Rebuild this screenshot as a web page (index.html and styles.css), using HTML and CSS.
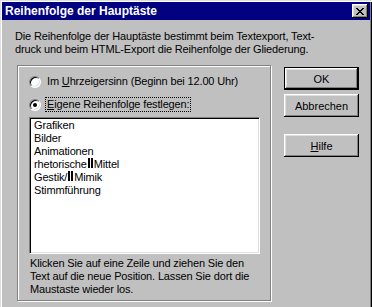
FILE: index.html
```html
<!DOCTYPE html>
<html lang="de">
<head>
    <meta charset="UTF-8">
    <title>Reihenfolge der Hauptäste</title>
    <link rel="stylesheet" href="styles.css">
</head>
<body>
    <div class="window">
        <div class="titlebar">
            <span class="title">Reihenfolge der Hauptäste</span>
            <button class="close" title="Schließen">
                <svg width="8" height="7" viewBox="0 0 8 7" shape-rendering="crispEdges">
                    <path d="M0 0h2v1h-2zM6 0h2v1h-2zM1 1h2v1h-2zM5 1h2v1h-2zM2 2h4v1h-4zM3 3h2v1h-2zM2 4h4v1h-4zM1 5h2v1h-2zM5 5h2v1h-2zM0 6h2v1h-2zM6 6h2v1h-2z" fill="#000"/>
                </svg>
            </button>
        </div>

        <div class="client">
            <p class="intro">Die Reihenfolge der Hauptäste bestimmt beim Textexport, Text-<br>druck und beim HTML-Export die Reihenfolge der Gliederung.</p>

            <div class="main">
                <div class="group">
                    <div class="option">
                        <span class="radio"></span>
                        <span class="label">Im <u>U</u>hrzeigersinn (Beginn bei 12.00 Uhr)</span>
                    </div>
                    <div class="option">
                        <span class="radio checked"></span>
                        <span class="label focused"><u>E</u>igene Reihenfolge festlegen:</span>
                    </div>

                    <ul class="listbox">
                        <li>Grafiken</li>
                        <li>Bilder</li>
                        <li>Animationen</li>
                        <li>rhetorische<span class="sep"></span>Mittel</li>
                        <li>Gestik/<span class="sep"></span>Mimik</li>
                        <li>Stimmführung</li>
                    </ul>

                    <p class="hint">Klicken Sie auf eine Zeile und ziehen Sie den<br>Text auf die neue Position. Lassen Sie dort die<br>Maustaste wieder los.</p>
                </div>

                <div class="buttons">
                    <button class="btn default">OK</button>
                    <button class="btn">Abbrechen</button>
                    <button class="btn help"><u>H</u>ilfe</button>
                </div>
            </div>
        </div>
    </div>
</body>
</html>
```

FILE: styles.css
```css
body {
    margin: 0;
    padding: 0;
    background-color: #c0c0c0;
    font-family: "Liberation Sans", Arial, sans-serif;
    font-size: 11px;
    line-height: 13px;
    letter-spacing: -0.15px;
    color: #000;
}
.window {
    width: 372px;
    height: 307px;
    box-sizing: border-box;
    padding: 2px 2px 0 2px;
    background-color: #c0c0c0;
    box-shadow: inset 1px 1px #dfdfdf, inset 2px 2px #fff, inset -1px 0 #000, inset -2px 0 #808080;
    overflow: hidden;
}
.titlebar {
    height: 18px;
    background-color: #000080;
    display: flex;
    align-items: center;
    justify-content: space-between;
    padding: 0 2px 0 3px;
}
.title {
    color: #fff;
    font-weight: bold;
    font-size: 12px;
    letter-spacing: 0;
}
.close {
    width: 16px;
    height: 14px;
    padding: 0;
    border: none;
    background-color: #c0c0c0;
    box-shadow: inset -1px -1px #000, inset 1px 1px #fff, inset -2px -2px #808080, inset 2px 2px #dfdfdf;
    display: flex;
    align-items: center;
    justify-content: center;
}
.client {
    padding: 10px 0 0 13px;
}
.intro {
    margin: 0;
    white-space: nowrap;
}
.main {
    display: flex;
    align-items: flex-start;
    margin-top: 9px;
}
.group {
    width: 254px;
    height: 236px;
    box-sizing: border-box;
    margin-left: 2px;
    padding: 4px 0 0 11px;
    border: 1px solid #808080;
    box-shadow: inset 1px 1px #fff, 1px 1px #fff;
}
.option {
    height: 23px;
    display: flex;
    align-items: center;
}
.radio {
    width: 12px;
    height: 12px;
    box-sizing: border-box;
    border-radius: 50%;
    border: 1px solid;
    border-color: #808080 #fff #fff #808080;
    background-color: #fff;
    box-shadow: inset 1px 1px #000, inset -1px -1px #dfdfdf;
    display: flex;
    align-items: center;
    justify-content: center;
}
.radio.checked::after {
    content: "";
    width: 4px;
    height: 4px;
    border-radius: 50%;
    background-color: #000;
}
.label {
    margin-left: 4px;
    padding: 0 1px;
    border: 1px solid transparent;
    white-space: nowrap;
}
.label.focused {
    border: 1px dotted #000;
}
.listbox {
    list-style: none;
    margin: 1px 0 0 0;
    width: 231px;
    height: 137px;
    box-sizing: border-box;
    padding: 1px 0 0 3px;
    background-color: #fff;
    border: 1px solid;
    border-color: #808080 #fff #fff #808080;
    box-shadow: inset 1px 1px #000, inset -1px -1px #dfdfdf;
}
.listbox li {
    padding-left: 1px;
    white-space: nowrap;
}
.sep {
    display: inline-block;
    width: 1px;
    height: 10px;
    margin: 0 1px;
    border-left: 2px solid #000;
    border-right: 2px solid #000;
    vertical-align: baseline;
}
.hint {
    margin: 3px 0 0 1px;
    white-space: nowrap;
}
.buttons {
    display: flex;
    flex-direction: column;
    margin: 2px 0 0 13px;
}
.btn {
    width: 75px;
    height: 23px;
    padding: 0;
    border: none;
    background-color: #c0c0c0;
    font-family: "Liberation Sans", Arial, sans-serif;
    font-size: 11px;
    color: #000;
    box-shadow: inset -1px -1px #000, inset 1px 1px #fff, inset -2px -2px #808080, inset 2px 2px #dfdfdf;
    margin-bottom: 4px;
}
.btn.default {
    box-shadow: inset 0 0 0 1px #000, inset -2px -2px #000, inset 2px 2px #fff, inset -3px -3px #808080, inset 3px 3px #dfdfdf;
}
.btn.help {
    margin-top: 13px;
}
```
